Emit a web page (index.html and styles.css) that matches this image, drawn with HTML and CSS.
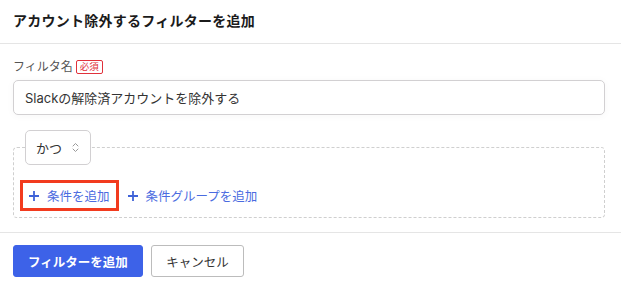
FILE: index.html
```html
<!DOCTYPE html>
<html lang="ja">
<head>
<meta charset="utf-8">
<title>アカウント除外するフィルターを追加</title>
<link rel="stylesheet" href="styles.css">
</head>
<body>
<div class="dialog">
  <header class="head">
    <h1 class="title">アカウント除外するフィルターを追加</h1>
  </header>
  <section class="body">
    <div class="label-row">
      <span class="label">フィルタ名</span>
      <span class="badge">必須</span>
    </div>
    <div class="input">Slackの解除済アカウントを除外する</div>
    <fieldset class="group">
      <legend class="legend">
        <div class="select">
          <span>かつ</span>
          <svg class="chev" width="7" height="13" viewBox="0 0 7 13"><path d="M1 5 L3.5 2.5 L6 5" fill="none" stroke="#9a9a9a" stroke-width="1" stroke-linecap="round" stroke-linejoin="round"/><path d="M1 8 L3.5 10.5 L6 8" fill="none" stroke="#9a9a9a" stroke-width="1" stroke-linecap="round" stroke-linejoin="round"/></svg>
        </div>
      </legend>
      <div class="actions">
        <button class="link highlighted">
          <svg class="plus" width="10" height="10" viewBox="0 0 10 10"><path d="M5 0 V10 M0 5 H10" stroke="#3f63d8" stroke-width="1.8"/></svg>
          <span>条件を追加</span>
        </button>
        <button class="link">
          <svg class="plus" width="10" height="10" viewBox="0 0 10 10"><path d="M5 0 V10 M0 5 H10" stroke="#3f63d8" stroke-width="1.8"/></svg>
          <span>条件グループを追加</span>
        </button>
      </div>
    </fieldset>
  </section>
  <footer class="foot">
    <button class="btn primary">フィルターを追加</button>
    <button class="btn secondary">キャンセル</button>
  </footer>
</div>
</body>
</html>
```
FILE: styles.css
```css
html, body {
  margin: 0;
  padding: 0;
  background: #ffffff;
}
body {
  font-family: "Inter", "Noto Sans CJK JP", sans-serif;
  color: #222;
}
.dialog {
  width: 621px;
}
.head {
  height: 44px;
  box-sizing: border-box;
  border-bottom: 1px solid #e5e5e5;
  display: flex;
  align-items: center;
  padding: 0 13px 1px;
}
.title {
  margin: 0;
  font-size: 14px;
  font-weight: 700;
  line-height: 20px;
  letter-spacing: 0.25px;
  color: #1b1b1b;
}
.body {
  padding: 15px 16px 14px 13px;
  border-bottom: 1px solid #e5e5e5;
}
.label-row {
  display: flex;
  align-items: center;
  gap: 3px;
  height: 16px;
  margin-bottom: 5px;
}
.label {
  font-size: 12px;
  line-height: 16px;
  color: #555;
}
.badge {
  font-size: 9.5px;
  line-height: 12px;
  color: #e0313b;
  border: 1px solid #e0313b;
  border-radius: 2px;
  padding: 0 3px;
  background: #fff;
}
.input {
  height: 35px;
  box-sizing: border-box;
  border: 1px solid #d2d0d2;
  border-radius: 5px;
  padding: 0 11px;
  display: flex;
  align-items: center;
  font-size: 13px;
  color: #333;
  box-shadow: 0 1px 8px rgba(0, 0, 0, 0.035);
}
.group {
  margin: 15px 0 0 0;
  padding: 0 8px 6px 6px;
  border: 1px dashed #cfcfcf;
  border-radius: 4px;
  min-width: 0;
}
.legend {
  padding: 0;
  margin-left: 5px;
}
.select {
  width: 66px;
  height: 35px;
  box-sizing: border-box;
  border: 1px solid #d2d0d2;
  border-radius: 5px;
  background: #fff;
  display: flex;
  align-items: center;
  justify-content: space-between;
  padding: 0 11px 0 10px;
  font-size: 13px;
  color: #333;
}
.chev {
  display: block;
}
.actions {
  display: flex;
  align-items: center;
  margin-top: 15px;
}
.link {
  display: flex;
  align-items: center;
  gap: 8px;
  height: 31px;
  box-sizing: border-box;
  border: 3px solid transparent;
  padding: 0 6px;
  background: none;
  font-family: inherit;
  font-size: 12.5px;
  color: #4a6be0;
  cursor: pointer;
  white-space: nowrap;
}
.highlighted {
  border-color: #f23b1e;
}
.plus {
  display: block;
}
.foot {
  display: flex;
  gap: 8px;
  padding: 12px 13px 14px;
}
.btn {
  height: 32px;
  box-sizing: border-box;
  border-radius: 3px;
  font-family: inherit;
  font-size: 12.5px;
  padding: 0;
  white-space: nowrap;
  display: flex;
  align-items: center;
  justify-content: center;
  cursor: pointer;
}
.primary {
  width: 130px;
  background: #3d62e8;
  border: 1px solid #3d62e8;
  color: #fff;
  font-weight: 700;
}
.secondary {
  width: 93px;
  background: #fff;
  border: 1px solid #bcbcbc;
  color: #333;
}
```
